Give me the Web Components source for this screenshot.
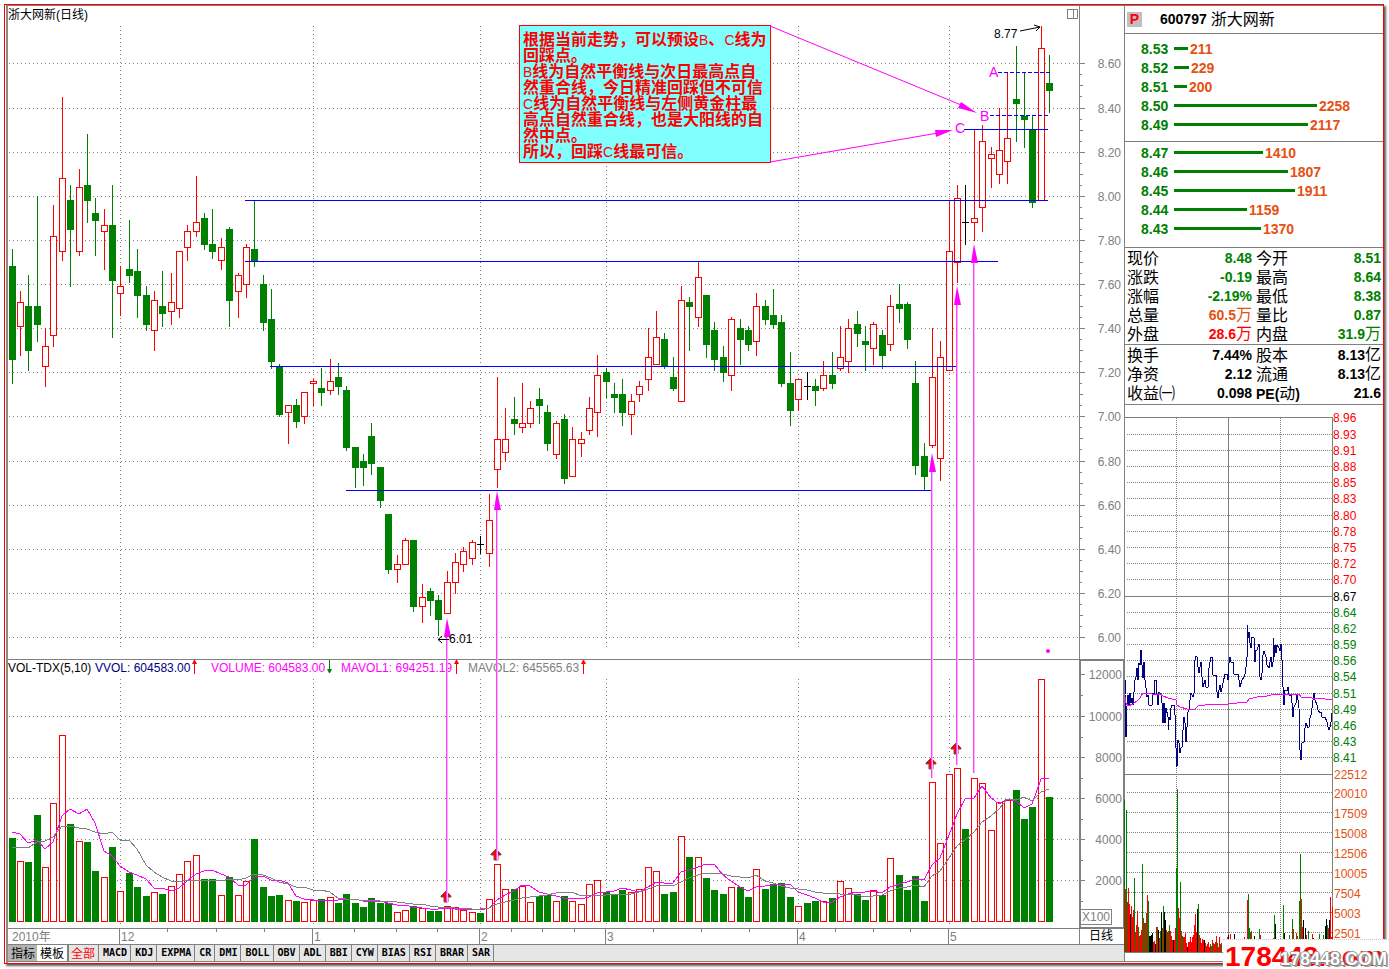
<!DOCTYPE html>
<html lang="zh-CN">
<head>
<meta charset="utf-8">
<title>浙大网新(日线)</title>
<style>
  html, body { margin: 0; background: #fff; }
  body { font: 12px/16px "Liberation Sans", "Noto Sans CJK SC", sans-serif; color: #000; }
</style>
</head>
<body>
<stock-terminal>
  <kline-chart slot="chart"></kline-chart>
  <indicator-tabs slot="tabs"></indicator-tabs>
  <quote-header slot="side" code="600797">浙大网新</quote-header>
  <order-book slot="side" class="asks" label="卖盘"></order-book>
  <order-book slot="side" class="bids" label="买盘"></order-book>
  <quote-facts slot="side"></quote-facts>
  <intraday-chart slot="side"></intraday-chart>
</stock-terminal>
<site-mark></site-mark>

<script>
const GREEN = '#008000', RED = '#ff0000', GRAY = '#808080', NAVY = '#000080', PINK = '#ff00ff', ORANGE = '#e65010';

const rect = (x, y, w, h, fill) => `<rect x="${x}" y="${y}" width="${w}" height="${h}" fill="${fill}"/>`;
const text = (x, y, s, fill, extra = '') => `<text x="${x}" y="${y}" fill="${fill}" ${extra}>${s}</text>`;
const hDots = (x0, x1, y, step) => { let d = ''; for (let x = x0; x < x1; x += step) d += `M${x} ${y}h1v1h-1z`; return d; };
const vDots = (x, y0, y1, step) => { let d = ''; for (let y = y0; y < y1; y += step) d += `M${x} ${y}h1v1h-1z`; return d; };

class Part extends HTMLElement {
  connectedCallback() {
    if (this.shadowRoot) return;
    this.attachShadow({ mode: 'open' }).innerHTML = this.render();
  }
}

/* Framed window: chart and tabs on the left, quote column on the right */
customElements.define('stock-terminal', class extends Part {
  render() {
    return `<style>
      :host { display: block; box-sizing: border-box; padding: 4px 5px 5px 4px; }
      .frame { display: flex; border: 1px solid ${RED}; box-shadow: 2px 2px 2px #606060; background: #fff; }
      .inner { display: flex; flex: 1; min-width: 0; margin-left: 1px; padding-bottom: 1px;
               border-left: 2px solid #8c8c80; border-top: 1px solid ${GRAY}; }
      main { flex: 1; min-width: 0; display: flex; flex-direction: column; }
      aside { flex: none; width: 258px; border-left: 1px solid ${GRAY}; }
    </style>
    <div class="frame"><div class="inner">
      <main><slot name="chart"></slot><slot name="tabs"></slot></main>
      <aside><slot name="side"></slot></aside>
    </div></div>`;
  }
});

/* Daily bars: x, high, body top, body bottom, low, kind (r rise, g fall, k flat), volume top */
const BARS = `12 249 266 360 384 g 838;20 291 302 327 356 r 861;28 275 306 351 371 g 862;37 196 306 325 342 g 815;45 328 346 367 387 r 867;
53 205 236 336 347 r 803;62 97 178 252 261 r 735;70 185 200 230 287 g 824;79 169 187 252 256 r 841;87 134 185 201 223 g 842;
95 198 213 221 256 g 871;104 209 225 232 270 r 877;112 185 225 281 338 g 847;120 266 286 294 316 r 891;129 220 269 276 283 g 873;
137 249 271 296 318 g 887;146 286 295 325 331 g 896;154 291 300 331 351 r 892;162 271 306 314 327 g 894;171 273 302 312 325 r 886;
179 251 251 309 318 r 874;187 225 231 248 261 r 861;196 176 222 232 237 r 855;204 213 218 245 250 g 879;212 209 244 252 259 g 879;
221 238 247 261 270 r 895;229 227 229 301 327 g 877;238 273 275 292 318 r 895;246 244 247 285 298 r 881;254 201 249 262 267 g 839;
263 275 284 323 331 g 887;271 289 319 362 369 g 896;279 364 366 415 417 g 895;288 405 405 413 444 r 900;296 399 405 422 428 g 901;
304 392 392 417 424 r 902;313 379 381 384 406 r 900;321 368 388 393 406 g 899;330 359 381 391 395 r 897;338 363 377 387 395 g 903;
346 386 390 448 451 g 894;355 447 447 468 488 g 903;363 454 461 468 486 g 907;371 423 436 464 475 g 898;380 467 467 501 508 g 903;
388 514 514 570 574 g 903;397 555 564 570 583 r 912;405 538 540 565 565 r 910;413 540 540 607 612 g 906;422 584 597 607 623 r 908;
430 588 591 601 616 g 911;438 595 600 620 636 g 911;447 571 582 614 614 r 906;455 553 562 583 594 r 907;463 547 551 565 572 r 910;
472 540 542 559 565 r 912;480 536 544 545 554 k 913;489 494 520 554 567 r 899;497 377 439 470 488 r 864;505 408 439 453 462 r 889;
514 397 419 424 435 g 889;522 383 423 428 433 r 886;530 401 408 424 428 r 902;539 388 399 406 424 g 896;547 405 412 444 451 g 895;
556 421 423 455 459 r 901;564 414 419 479 484 g 896;572 427 439 477 477 r 901;581 432 439 444 457 r 904;589 397 408 431 435 r 884;
597 355 375 413 437 r 880;606 368 372 382 398 g 892;614 383 394 398 413 g 895;622 379 394 413 426 g 890;631 394 401 415 435 r 892;
639 381 386 395 402 r 889;648 328 357 380 391 r 867;656 311 337 365 365 r 871;664 333 339 367 369 g 894;673 357 377 389 391 g 892;
681 286 300 402 402 r 836;689 297 302 307 351 g 857;698 261 277 318 327 r 857;706 295 295 345 358 g 878;714 322 330 360 371 g 890;
723 346 357 373 382 g 894;731 317 319 376 391 r 887;740 319 328 340 365 g 887;748 326 330 345 351 g 897;756 293 306 342 356 r 869;
765 300 306 320 325 g 889;773 289 315 325 329 g 884;781 315 322 384 387 g 883;790 352 383 411 426 g 897;798 379 379 400 411 r 906;
807 372 386 387 400 k 903;815 379 386 391 406 g 901;823 361 375 389 391 r 901;832 352 375 384 389 g 898;840 326 357 369 371 r 881;
848 319 328 362 373 r 888;857 311 324 334 347 g 894;865 326 341 345 371 g 900;873 322 324 349 365 r 890;882 330 335 356 369 g 895;
890 295 306 345 351 r 858;899 284 304 309 323 g 875;907 302 304 340 349 g 890;915 361 383 466 475 g 876;924 443 456 477 490 g 901;
932 328 377 446 448 r 782;940 341 357 459 481 r 843;949 200 251 371 371 r 774;957 185 198 263 283 r 768;965 185 222 223 245 k 829;
974 129 218 223 241 r 778;982 125 141 208 232 r 783;991 147 154 159 188 r 830;999 108 150 175 184 r 802;1007 72 138 162 184 r 800;
1016 46 99 104 142 g 790;1024 72 116 120 148 g 819;1032 115 129 203 208 g 807;1041 26 48 201 201 r 679;1049 55 83 91 113 g 797`
  .split(';').map(r => { const p = r.trim().split(' '); return { x: +p[0], hi: +p[1], top: +p[2], bot: +p[3], lo: +p[4], kind: p[5], vol: +p[6] }; });

customElements.define('kline-chart', class extends Part {
  average(n, seed) {
    return BARS.map((b, i) => {
      const y = i < seed.length ? seed[i] : Math.round(BARS.slice(i - n + 1, i + 1).reduce((s, v) => s + v.vol, 0) / n);
      return `${b.x},${y}`;
    }).join(' ');
  }
  render() {
    const months = [[120, '12'], [313, '1'], [480, '2'], [606, '3'], [798, '4'], [949, '5']];
    const prices = [63, 108, 152, 196, 240, 284, 328, 372, 416, 461, 505, 549, 593, 637];
    const vols = [674, 716, 757, 798, 839, 880];

    let grid = '';
    prices.forEach(y => grid += hDots(9, 1079, y, 4));
    vols.slice(1).forEach(y => grid += hDots(9, 1079, y, 4));
    months.forEach(([x]) => grid += vDots(x, 26, 648, 4) + vDots(x, 679, 925, 4));

    let axis = '';
    prices.forEach((y, i) => {
      axis += rect(1080, y, 5, 1, GRAY) + text(1121, y + 5, (8.6 - i * 0.2).toFixed(2), GRAY, 'text-anchor="end"');
      if (i < 13) axis += rect(1080, y + 11, 2, 1, GRAY) + rect(1080, y + 22, 3, 1, GRAY) + rect(1080, y + 33, 2, 1, GRAY);
    });
    vols.forEach((y, i) => {
      axis += rect(1081, y, 4, 1, GRAY) + rect(1081, y + 21, 2, 1, GRAY) + text(1122, y + 5, 12000 - i * 2000, GRAY, 'text-anchor="end"');
    });

    let candles = '', volume = '';
    BARS.forEach(b => {
      const c = { r: RED, g: GREEN, k: '#000' }[b.kind];
      candles += rect(b.x, b.hi, 1, b.lo - b.hi, c) + rect(b.x - 3, b.top, 7, b.bot - b.top, c);
      volume += rect(b.x - 3, b.vol, 7, 922 - b.vol, b.kind === 'r' ? RED : GREEN);
      if (b.kind === 'r') {
        candles += rect(b.x - 2, b.top + 1, 5, b.bot - b.top - 2, '#fff');
        volume += rect(b.x - 2, b.vol + 1, 5, 922 - b.vol - 2, '#fff');
      }
    });

    const levels = [[245, 1048, 200], [245, 998, 261], [270, 956, 366], [346, 932, 490], [964, 1048, 129]]
      .map(([a, b, y]) => rect(a, y, b - a, 1, '#0000ff')).join('');
    let dashes = '';
    for (let x = 998; x < 1048; x += 6) dashes += rect(x, 72, 4, 1, '#0000ff');
    for (let x = 990; x < 1048; x += 6) dashes += rect(x, 115, 4, 1, '#0000ff');

    const risers = [[446, 618, 903], [496, 491, 860], [931, 453, 778], [956, 286, 765], [973, 244, 773]]
      .map(([x, a, b]) => rect(x, a + 16, 1, b - a - 16, '#ff40ff') + rect(x + 1, a + 16, 1, b - a - 16, '#ffb0ff')
        + `<path d="M${x + 1} ${a}l4 19h-7z" fill="${PINK}"/>`).join('');
    const flags = [[446, 891], [496, 849], [931, 758], [956, 743]]
      .map(([x, y]) => `<path d="M${x} ${y}l5 5v1h-3v5h-4v-5h-3v-1z" fill="${RED}" stroke="#705050"/>`
        + rect(x, y + 2, 1, 9, '#e020a0')).join('');
    const up = x => rect(x, 661, 1, 13, RED) + `<path d="M${x - 2} 664h5l-2-4h-1z" fill="${RED}"/>`;
    const down = x => rect(x, 660, 1, 13, GREEN) + `<path d="M${x - 2} 669h5l-2 4h-1z" fill="${GREEN}"/>`;

    const note = ['根据当前走势，可以预设B、C线为', '回踩点。', 'B线为自然平衡线与次日最高点自', '然重合线，今日精准回踩但不可信',
      'C线为自然平衡线与左侧黄金柱最', '高点自然重合线，也是大阳线的自', '然中点。', '所以，回踩C线最可信。']
      .map((s, i) => text(523, 45 + i * 16, s.replace(/[BC]/g, '<tspan class="latin">$&</tspan>'), RED)).join('');

    const ticks = [167, 216, 264, 354, 396, 437, 511, 542, 574, 653, 701, 749, 835, 873, 910]
      .map(x => rect(x, 929, 1, 3, GRAY)).join('');

    return `<style>
      :host { display: block; }
      svg { display: block; width: 100%; height: auto; font-size: 12px; }
      .note { font-weight: bold; font-size: 16px; }
      .latin { font-weight: normal; font-size: 14px; }
      .mark { font-size: 14px; }
      .line { fill: none; stroke-width: 1; shape-rendering: crispEdges; }
    </style>
    <svg viewBox="8 6 1116 938" role="img" aria-label="浙大网新 日线">
      <path d="${grid}" fill="${GRAY}"/>
      ${rect(1079, 6, 1, 938, GRAY)}${rect(8, 659, 1116, 1, GRAY)}${rect(8, 928, 1116, 1, GRAY)}
      <path d="M1080 660h44v268h-44z M1081 661v266h42v-266z" fill="${GRAY}" fill-rule="evenodd"/>
      ${axis}
      <path d="M1080 909h32v16h-32z M1081 910v14h30v-14z" fill="${GRAY}" fill-rule="evenodd"/>
      ${text(1082, 921, 'X100', GRAY)}
      <path d="M1067 9h11v10h-11z M1068 10v8h5v-8z M1074 10v8h3v-8z" fill="${GRAY}" fill-rule="evenodd"/>
      ${text(8, 19, '浙大网新(日线)', '#000')}
      ${candles}${volume}
      <polyline class="line" stroke="${PINK}" points="${this.average(5, [832, 834, 843, 840])}"/>
      <polyline class="line" stroke="${GRAY}" points="${this.average(10, [847, 847, 848, 842, 841, 837, 826, 826, 828])}"/>
      ${levels}${dashes}
      ${text(8, 672, 'VOL-TDX(5,10)', '#000')}
      ${text(95, 672, 'VVOL: 604583.00', NAVY)}${up(194)}
      ${text(211, 672, 'VOLUME: 604583.00', PINK)}${down(329)}
      ${text(341, 672, 'MAVOL1: 694251.19', PINK)}${up(456)}
      ${text(468, 672, 'MAVOL2: 645565.63', GRAY)}${up(583)}
      ${flags}${risers}
      ${rect(519, 25, 252, 138, RED)}${rect(520, 26, 250, 136, '#80ffff')}
      <g class="note">${note}</g>
      <path d="M770 26L966 107M770 162L938 133" fill="none" stroke="${PINK}"/>
      <path d="M977 113L958 108 961 102zM953 130L936 137 935 130z" fill="${PINK}"/>
      <g class="mark">${text(989, 77, 'A', PINK)}${text(980, 121, 'B', PINK)}${text(955, 133, 'C', PINK)}</g>
      ${text(994, 38, '8.77', '#000')}
      <path d="M1020 31L1040 27M1034 25L1040 27 1036 31" fill="none" stroke="#000"/>
      ${text(449, 643, '6.01', '#000')}
      <path d="M449 639.5H438M442 636L438 639.5 442 643" fill="none" stroke="#000"/>
      <circle cx="1048" cy="651" r="2" fill="${PINK}"/>
      ${ticks}
      ${months.map(([x, m]) => rect(x - 1, 929, 1, 15, GRAY) + text(x + 1, 941, m, GRAY)).join('')}
      ${text(12, 941, '2010年', GRAY)}
      ${text(1101, 940, '日线', '#000', 'text-anchor="middle"')}
    </svg>`;
  }
});

customElements.define('indicator-tabs', class extends Part {
  render() {
    const names = ['MACD', 'KDJ', 'EXPMA', 'CR', 'DMI', 'BOLL', 'OBV', 'ADL', 'BBI', 'CYW', 'BIAS', 'RSI', 'BRAR', 'SAR'];
    return `<style>
      :host { display: block; }
      nav { display: flex; box-sizing: border-box; height: 18px; background: #e6e6e6; border: solid ${GRAY}; border-width: 1px 0; }
      button { margin: 0; border: 0; border-right: 1px solid ${GRAY}; padding: 0 3px 0 4px; background: none; color: #000;
               font: bold 10px/16px "DejaVu Sans Mono", monospace; white-space: nowrap; }
      .zh { font: 12px/16px "Noto Sans CJK SC", sans-serif; padding: 0 2px 0 3px; }
      .on { background: #b4b4b4; border-right: 0; }
      .tpl { background: #fff; padding: 0 3px; border-right-width: 2px; }
      .all { color: ${RED}; padding: 0 3px 0 2px; }
    </style>
    <nav aria-label="指标">
      <button class="zh on" type="button">指标</button><button class="zh tpl" type="button">模板</button><button class="zh all" type="button">全部</button>
      ${names.map(n => `<button type="button">${n}</button>`).join('')}
    </nav>`;
  }
});

customElements.define('quote-header', class extends Part {
  render() {
    return `<style>
      :host { display: flex; align-items: center; height: 27px; padding-left: 2px; border-bottom: 1px solid ${GRAY}; font-size: 16px; line-height: 27px; }
      .badge { width: 15px; height: 15px; background: #c0c0c0; color: ${RED}; font: bold 14px/15px "Liberation Sans", sans-serif; text-align: center; }
      b { font-size: 14px; margin: 0 4px 0 18px; }
    </style>
    <span class="badge">P</span><b>${this.getAttribute('code')}</b><span><slot></slot></span>`;
  }
});

const BOOK = {
  asks: [['8.53', 211, 14], ['8.52', 229, 15], ['8.51', 200, 13], ['8.50', 2258, 143], ['8.49', 2117, 134]],
  bids: [['8.47', 1410, 89], ['8.46', 1807, 114], ['8.45', 1911, 121], ['8.44', 1159, 73], ['8.43', 1370, 87]]
};

customElements.define('order-book', class extends Part {
  render() {
    return `<style>
      :host { display: block; padding: 6px 0; border-bottom: 1px solid ${GRAY}; }
      :host(.bids) { padding: 2px 0 8px; }
      table { border-collapse: collapse; width: 100%; font: bold 14px/19px "Liberation Sans", sans-serif; }
      th, td { padding: 0; height: 19px; text-align: left; color: ${ORANGE}; }
      th { width: 33px; padding-left: 16px; color: ${GREEN}; }
      div { display: flex; align-items: center; gap: 2px; }
      i { height: 3px; margin-bottom: 2px; background: ${GREEN}; }
    </style>
    <table aria-label="${this.getAttribute('label')}"><tbody>
      ${BOOK[this.className].map(([p, q, w]) => `<tr><th scope="row">${p}</th><td><div><i style="width:${w}px"></i>${q}</div></td></tr>`).join('')}
    </tbody></table>`;
  }
});

customElements.define('quote-facts', class extends Part {
  render() {
    const wan = '<span>万</span>', yi = '<span>亿</span>';
    const groups = [
      [['现价', '8.48', 'g', '今开', '8.51', 'g'], ['涨跌', '-0.19', 'g', '最高', '8.64', 'g'], ['涨幅', '-2.19%', 'g', '最低', '8.38', 'g'],
       ['总量', '60.5' + wan, 'o', '量比', '0.87', 'g'], ['外盘', '28.6' + wan, 'r', '内盘', '31.9' + wan, 'g']],
      [['换手', '7.44%', '', '股本', '8.13' + yi, ''], ['净资', '2.12', '', '流通', '8.13' + yi, ''], ['收益㈠', '0.098', '', '<b>PE(</b>动<b>)</b>', '21.6', '']]
    ];
    return `<style>
      :host { display: block; }
      table { border-collapse: collapse; table-layout: fixed; width: 100%; }
      section { padding: 1px 2px 0 0; border-bottom: 1px solid ${GRAY}; }
      section:last-child { padding-bottom: 1px; }
      th, td { padding: 0; height: 19px; line-height: 19px; white-space: nowrap; }
      th { width: 51px; padding-left: 2px; text-align: left; font-weight: normal; font-size: 16px; }
      th:nth-child(3) { width: 50px; padding-left: 4px; }
      td { width: 74px; text-align: right; font-weight: bold; font-size: 14px; }
      td:last-child { width: auto; }
      b { font-size: 14px; line-height: 14px; }
      td span { font-weight: normal; font-size: 16px; line-height: 16px; }
      .g { color: ${GREEN}; } .r { color: ${RED}; } .o { color: ${ORANGE}; }
    </style>
    ${groups.map(g => `<section><table><tbody>${g.map(([a, b, c, d, e, f]) =>
      `<tr><th scope="row">${a}</th><td class="${c}">${b}</td><th scope="row">${d}</th><td class="${f}">${e}</td></tr>`).join('')}</tbody></table></section>`).join('')}`;
  }
});

const PRICE_LINE = `1125,680 1125,694 1126,737 1127,706 1128,695 1129,705 1130,693 1131,703 1132,698 1133,705 1134,692 1135,680 1136,677 1137,668 1138,680 1139,663 1140,665 1141,650
1142,665 1143,678 1144,662 1145,680 1146,688 1147,697 1148,695 1149,705 1152,705 1153,693 1154,695 1155,680 1156,680 1157,695 1158,705 1159,692 1161,694 1162,703 1163,723 1164,703
1165,723 1166,708 1168,717 1168,730 1169,717 1170,720 1171,708 1172,705 1174,705 1175,715 1176,748 1177,767 1178,740 1179,743 1180,753 1181,748 1182,747 1183,730 1184,717 1185,723
1186,742 1187,727 1188,712 1189,710 1190,700 1191,693 1193,697 1194,693 1195,660 1196,656 1197,657 1198,667 1199,673 1201,662 1202,677 1203,687 1205,680 1206,687 1208,687 1209,668
1211,657 1212,657 1213,675 1216,675 1217,692 1218,698 1219,690 1220,685 1221,692 1222,688 1223,683 1225,674 1227,674 1228,680 1229,663 1230,657 1231,662 1233,662 1234,674 1238,674
1239,680 1240,687 1242,680 1244,677 1245,674 1246,667 1247,657 1247,625 1248,638 1249,632 1250,643 1251,648 1252,637 1254,638 1255,662 1256,650 1257,650 1259,644 1259,657 1260,677
1261,680 1262,673 1263,655 1264,651 1266,657 1267,665 1269,668 1270,662 1271,657 1272,667 1273,662 1273,638 1274,657 1275,645 1276,653 1277,645 1279,648 1280,651 1281,644 1282,660
1283,687 1284,705 1285,690 1287,691 1288,687 1289,695 1291,695 1292,703 1293,717 1294,707 1296,703 1297,694 1298,700 1299,708 1300,750 1301,760 1302,743 1304,742 1305,728 1306,723
1308,728 1309,727 1310,718 1311,715 1312,708 1313,700 1314,693 1315,700 1317,705 1318,710 1320,713 1321,712 1322,717 1325,717 1327,722 1328,727 1329,730 1330,727 1331,722 1332,713`;
const AVERAGE_LINE = '1125,697 1126,703 1128,706 1133,704 1137,701 1140,698 1143,693 1145,693 1152,694 1160,694 1163,696 1168,698 1176,700 1177,705 1180,707 1187,709 1195,709 1198,706 1205,705 1228,704 1247,702 1249,699 1257,697 1267,696 1275,694 1299,694 1301,697 1312,698 1325,699 1332,700';

/* Minute volumes: colour key followed by the y of each bar's top */
const MINUTES = `g800 r889 g810 r902 r888 r904 k914 r906 r917 r910 g878 r932 r925 r911 g927 r936 r935 r930 g864 r918 r923 g923 g913 r895 g901 k936 k936 k935 k933 r942 r941 k944
g927 r927 k930 r938 g931 k912 r928 g906 k912 k920 r930 g932 r931 g925 r931 r936 r940 k940 r940 r928 g868 g789 r908 r918 g882 r931 r936 g937 r937 r933 r943 k947 r942 r942
r937 r942 r937 r935 r925 r914 r932 k909 g904 r935 r938 r943 r939 r940 k940 r943 r946 r944 r942 r947 g944 r946 r940 g943 r944 r942 r936 g943 r947 r937 g944 r943`.split(/\s+/);
const LATE = 'r1227 937,k1228 935,r1230 934,k1234 934,r1244 937,r1247 900,g1248 894,g1249 928,r1250 932,g1251 931,k1254 936,g1259 929,r1260 935,r1273 938,g1274 915,k1275 924,g1283 905,k1284 933,g1289 935,g1292 919,r1293 929,r1296 933,g1297 936,g1299 901,g1300 854,r1301 899,r1302 927,k1303 920,k1305 928,r1306 935,g1308 931,r1312 934,k1313 938,g1319 934,g1323 935,k1325 926,k1326 919,g1327 925,r1328 928,k1329 920,r1330 897,r1331 937,r1332 907';

customElements.define('intraday-chart', class extends Part {
  render() {
    const prices = ['8.96', '8.93', '8.91', '8.88', '8.85', '8.83', '8.80', '8.78', '8.75', '8.72', '8.70', '8.67', '8.64', '8.62', '8.59', '8.56', '8.54', '8.51', '8.49', '8.46', '8.43', '8.41'];
    const rows = [417, 434, 450, 466, 482, 498, 515, 531, 547, 563, 579, 596, 612, 628, 644, 660, 676, 693, 709, 725, 741, 757];
    const vols = ['22512', '20010', '17509', '15008', '12506', '10005', '7504', '5003', '2501'];
    const volRows = [774, 793, 813, 833, 853, 873, 893, 913, 933];
    const colour = { g: GREEN, r: RED, k: '#000' };
    let dots = vDots(1176, 418, 952, 2) + vDots(1280, 418, 952, 2);
    rows.forEach((y, i) => { if (i && i !== 11) dots += hDots(1127, 1332, y, 2); });
    volRows.slice(1).forEach(y => dots += hDots(1127, 1332, y - 1, 2));
    const bars = MINUTES.map((m, i) => rect(1124 + i, +m.slice(1), 1, 952 - m.slice(1), colour[m[0]])).join('')
      + LATE.split(',').map(s => { const [x, y] = s.slice(1).split(' ').map(Number); return rect(x, y, 1, 952 - y, colour[s[0]]); }).join('');
    return `<style>
      :host { display: block; }
      svg { display: block; width: 100%; height: auto; overflow: visible; font-size: 12px; }
      polyline { fill: none; stroke-width: 1; shape-rendering: crispEdges; }
    </style>
    <svg viewBox="1125 405 258 557" role="img" aria-label="分时走势">
      <path d="${dots}" fill="${GRAY}"/>
      ${rect(1125, 417, 208, 1, GRAY)}${rect(1125, 596, 208, 1, GRAY)}${rect(1125, 774, 208, 1, GRAY)}
      ${rect(1228, 417, 1, 536, GRAY)}${rect(1332, 417, 1, 536, GRAY)}
      ${bars}
      ${rect(1125, 952, 208, 1, GRAY)}${rect(1125, 961, 258, 1, GRAY)}
      <polyline stroke="${NAVY}" points="${PRICE_LINE}"/>
      <polyline stroke="${PINK}" points="${AVERAGE_LINE}"/>
      ${rows.map((y, i) => text(1333, y + 5, prices[i], i < 11 ? RED : i === 11 ? '#000' : GREEN)).join('')}
      ${volRows.map((y, i) => text(1334, y + 5, vols[i], ORANGE)).join('')}
    </svg>`;
  }
});

/* Site stamp over the lower right corner */
customElements.define('site-mark', class extends Part {
  render() {
    return `<style>
      :host { position: absolute; right: 0; top: 939px; width: 166px; height: 30px; background: #fff;
              box-sizing: border-box; border-top: 1px dotted #c8c8c8; font-weight: bold; white-space: nowrap; }
      .big { position: absolute; left: 2px; top: 4px; font-size: 28px; line-height: 25px; color: ${RED}; }
      .small { position: absolute; right: 2px; top: 9px; font-size: 18px; line-height: 20px; color: #fff;
               text-shadow: -1px 0 #909090, 1px 0 #909090, 0 -1px #a0a0a0, 0 1px #808080, 2px 2px #a0a0a0; }
    </style>
    <span class="big">178448.com</span><span class="small">178448.COM</span>`;
  }
});
</script>
</body>
</html>
